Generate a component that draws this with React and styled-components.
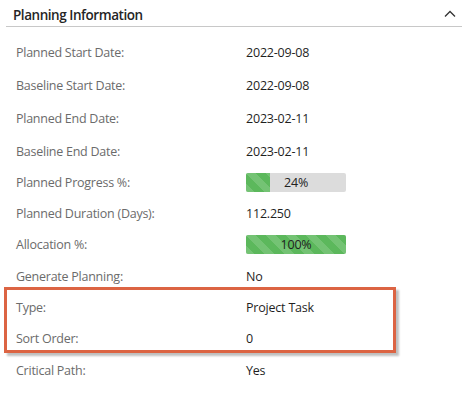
import styled, { createGlobalStyle } from "styled-components";

const GlobalStyle = createGlobalStyle`
    body {
        margin: 0;
        background: #fff;
        font-family: "Open Sans", "Noto Sans", sans-serif;
    }
`

const Panel = styled.div`
    width: 464px;
    height: 399px;
    background: #fff;
    overflow: hidden;
`
const Header = styled.div`
    display: flex;
    align-items: center;
    justify-content: space-between;
    height: 27px;
    margin: 0 2px 0 6px;
    padding: 0 6px 0 7px;
    border-bottom: 1px solid #c8c8c8;
    box-sizing: border-box;
`
const Title = styled.div`
    font-size: 13.5px;
    font-weight: 600;
    letter-spacing: -0.45px;
    color: #252525;
    margin-top: 3px;
`
const Chevron = styled.svg`
    width: 12px;
    height: 8px;
    margin-top: 1px;
`
const Body = styled.div`
    padding-top: 9px;
`
const Row = styled.div`
    display: grid;
    grid-template-columns: 230px 1fr;
    align-items: center;
    height: ${p => p.$h || 33}px;
    padding-left: 16px;
`
const Label = styled.div`
    font-size: 12.5px;
    letter-spacing: -0.25px;
    color: #6b6b6b;
`
const Value = styled.div`
    font-size: 12.5px;
    letter-spacing: -0.2px;
    color: #1f1f1f;
`
const Bar = styled.div`
    position: relative;
    width: 100px;
    height: 19px;
    background: #dcdcdc;
    border-radius: 2px;
    overflow: hidden;
    display: flex;
    align-items: center;
    justify-content: center;
`
const Fill = styled.div`
    position: absolute;
    left: 0;
    top: 0;
    bottom: 0;
    background-color: #5cb85c;
    background-image: linear-gradient(45deg, rgba(255,255,255,.15) 25%, transparent 25%, transparent 50%, rgba(255,255,255,.15) 50%, rgba(255,255,255,.15) 75%, transparent 75%, transparent);
    background-size: 20px 20px;
`
const BarText = styled.span`
    position: relative;
    font-size: 12.5px;
    color: #222;
`
const Highlight = styled.div`
    margin: -5px 0 1px 4px;
    width: 392px;
    height: 66px;
    box-sizing: border-box;
    border: 3px solid #dc6443;
    box-shadow: 3px 3px 2px rgba(0,0,0,.25);
    padding-top: 1px;
    & > div {
        padding-left: 9px;
    }
`

const Progress = ({ value }) => (
    <Bar>
        <Fill style={{ width: `${value}%` }} />
        <BarText>{value}%</BarText>
    </Bar>
)

const App = () => {
    return (
        <Panel>
            <GlobalStyle />
            <Header>
                <Title>Planning Information</Title>
                <Chevron viewBox="0 0 12 8">
                    <path d="M1 6.5 L6 1.5 L11 6.5" fill="none" stroke="#333" strokeWidth="1.3" />
                </Chevron>
            </Header>
            <Body>
                <Row><Label>Planned Start Date:</Label><Value>2022-09-08</Value></Row>
                <Row><Label>Baseline Start Date:</Label><Value>2022-09-08</Value></Row>
                <Row><Label>Planned End Date:</Label><Value>2023-02-11</Value></Row>
                <Row $h={32}><Label>Baseline End Date:</Label><Value>2023-02-11</Value></Row>
                <Row $h={31}><Label>Planned Progress %:</Label><Value><Progress value={24} /></Value></Row>
                <Row $h={31}><Label>Planned Duration (Days):</Label><Value>112.250</Value></Row>
                <Row $h={31}><Label>Allocation %:</Label><Value><Progress value={100} /></Value></Row>
                <Row $h={32}><Label>Generate Planning:</Label><Value>No</Value></Row>
                <Highlight>
                    <Row $h={32}><Label>Type:</Label><Value>Project Task</Value></Row>
                    <Row $h={30}><Label>Sort Order:</Label><Value>0</Value></Row>
                </Highlight>
                <Row $h={32}><Label>Critical Path:</Label><Value>Yes</Value></Row>
            </Body>
        </Panel>
    )
}

export default App
